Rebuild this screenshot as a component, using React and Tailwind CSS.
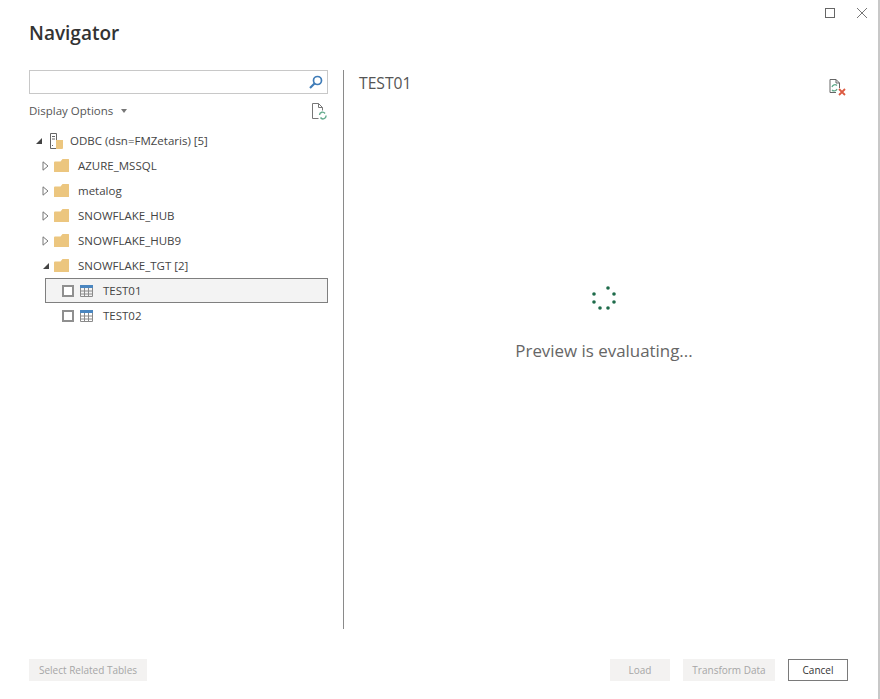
const FONT = "font-['Open_Sans',sans-serif]"

function Arrow({ open }) {
  return open ? (
    <svg width="8" height="8" viewBox="0 0 8 8" className="block"><path d="M7 1v6H1z" fill="#444" /></svg>
  ) : (
    <svg width="7" height="10" viewBox="0 0 7 10" className="block"><path d="M1 .8l5 4.200-5 4.200z" fill="#fff" stroke="#777" /></svg>
  )
}

function Folder() {
  return (
    <svg width="15" height="13" viewBox="0 0 15 13" className="block shrink-0">
      <path d="M0 3.500V12.500a.5.500 0 0 0 .5.500h14a.5.500 0 0 0 .5-.5V.5a.5.500 0 0 0-.5-.5H8.500L6.500 2.500H1a1 1 0 0 0-1 1z" fill="#ecc67f" />
    </svg>
  )
}

function TableIcon() {
  return (
    <svg width="13" height="12" viewBox="0 0 13 12" className="block shrink-0">
      <rect x="0" y="0" width="13" height="3" fill="#4a86c0" />
      <path d="M.5 3v8.500h12V3M4.500 3v8.500M8.500 3v8.500M.5 6h12M.5 9h12" fill="none" stroke="#8a8a8a" />
    </svg>
  )
}

function Check() {
  return <span className="block w-3 h-3 shrink-0 border-2 border-[#8f8f8f] bg-white" />
}

function FolderRow({ label, open }) {
  return (
    <div className="h-[25px] flex items-center pl-[13px]">
      <span className="w-[12px] flex justify-start"><Arrow open={open} /></span>
      <Folder />
      <span className="ml-[9px] text-[11.5px] text-[#444]">{label}</span>
    </div>
  )
}

function TableRow({ label, selected }) {
  return (
    <div className={`h-[25px] ml-[16px] flex items-center pl-[16px] border ${selected ? 'border-[#7f7f7f] bg-[#f3f3f3]' : 'border-transparent'}`}>
      <Check />
      <span className="ml-[6px]"><TableIcon /></span>
      <span className="ml-[10px] text-[11.5px] text-[#444]">{label}</span>
    </div>
  )
}

function Button({ children, className }) {
  return <div className={`h-[22px] flex items-center justify-center bg-[#f3f2f1] text-[10px] text-[#a6a6a6] ${className}`}>{children}</div>
}

export default function App() {
  return (
    <div className={`${FONT} relative w-[880px] h-[699px] bg-white border-r-2 border-[#c8c8c8] overflow-hidden flex flex-col`}>
      {/* window controls */}
      <div className="absolute top-[8px] right-[11px] flex items-center gap-[22px]">
        <span className="block w-[10px] h-[10px] border border-[#666]" />
        <svg width="10" height="10" viewBox="0 0 10 10" className="block"><path d="M0 0l10 10M10 0L0 10" stroke="#777" /></svg>
      </div>

      <h1 className="pt-[20px] pl-[29px] h-[70px] text-[19px] leading-[26px] font-semibold text-[#333]">Navigator</h1>

      <div className="flex h-[559px]">
        {/* left pane */}
        <div className="w-[343px] pl-[29px] pr-[15px] shrink-0">
          <div className="w-[299px] h-[24px] border border-[#c8c8c8] flex items-center justify-end pr-[4px]">
            <svg width="14" height="14" viewBox="0 0 14 14" className="block">
              <circle cx="8.500" cy="5.500" r="4" fill="none" stroke="#3f7cb8" strokeWidth="1.700" />
              <path d="M5.500 8.500L1 13" stroke="#3f7cb8" strokeWidth="2.200" />
            </svg>
          </div>
          <div className="w-[299px] h-[34px] flex items-center justify-between">
            <span className="flex items-center text-[11.5px] text-[#555]">
              Display Options
              <svg width="6" height="4" viewBox="0 0 6 4" className="ml-[8px] block"><path d="M0 0h6L3 4z" fill="#777" /></svg>
            </span>
            <svg width="16" height="17" viewBox="0 0 16 17" className="block mr-[1px]">
              <path d="M11.500 7.500v-3l-4-4h-6v15h6M7.500.5v4h4" fill="none" stroke="#777" />
              <path d="M8.500 12a3 3 0 0 1 5.500-1.500M15 12.500a3 3 0 0 1-5.500 2" fill="none" stroke="#63ab8d" strokeWidth="1.400" />
            </svg>
          </div>
          <div>
            <div className="h-[25px] flex items-center pl-[6px]">
              <span className="w-[15px]"><Arrow open /></span>
              <svg width="13" height="16" viewBox="0 0 13 16" className="block shrink-0">
                <path d="M.5.5h6v15h-6zM2 3.500h3M2 6h3M2 12.500h1" fill="none" stroke="#666" />
                <path d="M6 7h7v8a1 1 0 0 1-1 1H6z" fill="#ecc67f" />
              </svg>
              <span className="ml-[7px] text-[11.5px] text-[#444]">ODBC (dsn=FMZetaris) [5]</span>
            </div>
            <FolderRow label="AZURE_MSSQL" />
            <FolderRow label="metalog" />
            <FolderRow label="SNOWFLAKE_HUB" />
            <FolderRow label="SNOWFLAKE_HUB9" />
            <FolderRow label="SNOWFLAKE_TGT [2]" open />
            <TableRow label="TEST01" selected />
            <TableRow label="TEST02" />
          </div>
        </div>

        {/* right pane */}
        <div className="flex-1 border-l border-[#8a8a8a] pl-[15px] flex flex-col">
          <div className="flex justify-between pr-[31px]">
            <h2 className="text-[15.700px] leading-[26px] text-[#555]">TEST01</h2>
            <svg width="18" height="17" viewBox="0 0 18 17" className="block mt-[9px]">
              <path d="M1 13.500V.5h6l3.500 3.500v5M7 .5V4h3.500M1 13.500h6" fill="none" stroke="#666" />
              <path d="M3 8a3 3 0 0 1 5-1.500M8 10a3 3 0 0 1-5 1" fill="none" stroke="#63ab8d" strokeWidth="1.300" />
              <path d="M10 10l6 6M16 10l-6 6" stroke="#dc5a41" strokeWidth="1.800" />
            </svg>
          </div>
          <div className="flex flex-col items-center mt-[190px] mr-[29px]">
            <svg width="24" height="24" viewBox="0 0 24 24" className="block">
              <g fill="#1e6b4a">
                <circle cx="16" cy="2" r="1.800" />
                <circle cx="22" cy="8" r="1.800" />
                <circle cx="22" cy="16" r="1.800" />
                <circle cx="16" cy="22" r="1.800" />
                <circle cx="8" cy="22" r="1.800" />
                <circle cx="2" cy="16" r="1.800" />
                <circle cx="2" cy="8" r="1.800" />
              </g>
            </svg>
            <p className="mt-[30px] text-[16.900px] leading-[22px] text-[#666]">Preview is evaluating...</p>
          </div>
        </div>
      </div>

      {/* footer */}
      <div className="flex items-center justify-between pl-[29px] pr-[30px] mt-[30px]">
        <Button className="w-[118px]">Select Related Tables</Button>
        <div className="flex items-center">
          <Button className="w-[60px]">Load</Button>
          <Button className="w-[92px] ml-[13px]">Transform Data</Button>
          <div className="w-[60px] h-[22px] ml-[13px] border border-[#7a7a7a] flex items-center justify-center text-[10px] text-[#333]">Cancel</div>
        </div>
      </div>
    </div>
  )
}
